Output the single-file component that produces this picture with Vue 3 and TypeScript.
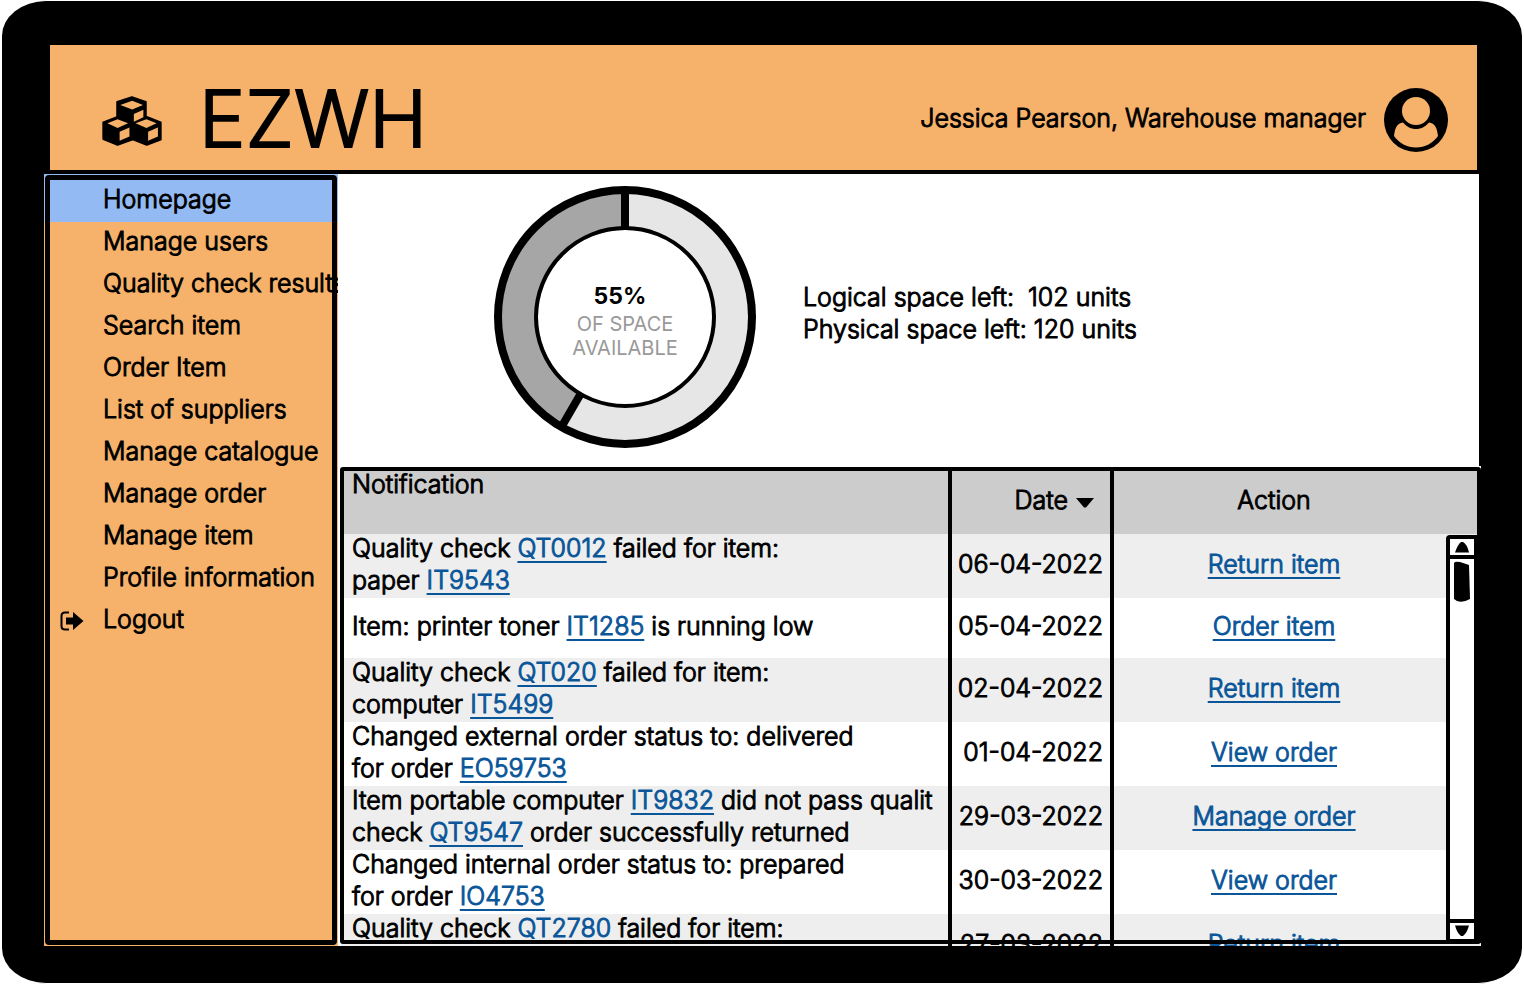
<script setup lang="ts">
interface Part {
  text: string
  link?: boolean
  br?: boolean
}
interface Row {
  parts: Part[]
  date: string
  action: string
  short?: boolean
}

const menu: string[] = [
  'Homepage',
  'Manage users',
  'Quality check results',
  'Search item',
  'Order Item',
  'List of suppliers',
  'Manage catalogue',
  'Manage order',
  'Manage item',
  'Profile information',
]

const rows: Row[] = [
  {
    parts: [
      { text: 'Quality check ' },
      { text: 'QT0012', link: true },
      { text: ' failed for item:', br: true },
      { text: 'paper ' },
      { text: 'IT9543', link: true },
    ],
    date: '06-04-2022',
    action: 'Return item',
  },
  {
    parts: [
      { text: 'Item: printer toner ' },
      { text: 'IT1285', link: true },
      { text: ' is running low' },
    ],
    date: '05-04-2022',
    action: 'Order item',
    short: true,
  },
  {
    parts: [
      { text: 'Quality check ' },
      { text: 'QT020', link: true },
      { text: ' failed for item:', br: true },
      { text: 'computer ' },
      { text: 'IT5499', link: true },
    ],
    date: '02-04-2022',
    action: 'Return item',
  },
  {
    parts: [
      { text: 'Changed external order status to: delivered', br: true },
      { text: 'for order ' },
      { text: 'EO59753', link: true },
    ],
    date: '01-04-2022',
    action: 'View order',
  },
  {
    parts: [
      { text: 'Item portable computer ' },
      { text: 'IT9832', link: true },
      { text: ' did not pass qualit', br: true },
      { text: 'check ' },
      { text: 'QT9547', link: true },
      { text: ' order successfully returned' },
    ],
    date: '29-03-2022',
    action: 'Manage order',
  },
  {
    parts: [
      { text: 'Changed internal order status to: prepared', br: true },
      { text: 'for order ' },
      { text: 'IO4753', link: true },
    ],
    date: '30-03-2022',
    action: 'View order',
  },
  {
    parts: [
      { text: 'Quality check ' },
      { text: 'QT2780', link: true },
      { text: ' failed for item:' },
    ],
    date: '27-03-2022',
    action: 'Return item',
  },
]
</script>

<template>
  <div class="device">
    <header class="top">
      <svg class="cubes" viewBox="36 35 177 146" aria-hidden="true">
        <g stroke="#000" stroke-width="6" stroke-linejoin="round">
          <path d="M81 52 124 38 165 52V98L124 114 81 98z" />
          <path d="M40 112 82 96 125 112V163L82 178 40 161z" />
          <path d="M125 112 168 96 209 112V163L168 178 125 161z" />
        </g>
        <g fill="#f6b26b">
          <path d="M90 61 125 48 157 61 125 74z" />
          <path d="M130 87 158 75V97L130 110z" />
          <path d="M52 115 82 103 113 115 82 129z" />
          <path d="M88 140 117 127V154L88 166z" />
          <path d="M135 115 167 103 197 115 167 129z" />
          <path d="M172 140 201 127V154L172 166z" />
        </g>
      </svg>
      <h1>EZWH</h1>
      <span class="user">Jessica Pearson, Warehouse manager</span>
      <svg class="avatar" viewBox="0 0 64 64" aria-hidden="true">
        <circle cx="32" cy="32" r="32" fill="#000" />
        <path d="M10 48C11 40 13 35 19 34.500 23 39 27 41 32 41s9-2 13-6.500C51 35 53 40 54 48 49 55 41 59.500 32 59.500S15 55 10 48z" fill="#f6b26b" />
        <circle cx="32" cy="23" r="16" fill="#000" />
        <circle cx="32" cy="23" r="14" fill="#f6b26b" />
      </svg>
    </header>

    <div class="body">
      <nav class="side">
        <a v-for="(item, i) in menu" :key="item" href="#" :class="{ active: i === 0 }">{{ item }}</a>
        <a href="#" class="logout">
          <svg viewBox="0 0 24 20" aria-hidden="true">
            <path d="M9 1.500H5Q1.500 1.500 1.500 5v10Q1.500 18.500 5 18.500h4" fill="none" stroke="#000" stroke-width="2" />
            <path d="M6 6.500h7V1l10.500 9L13 19v-5.500H6z" />
          </svg>
          Logout
        </a>
      </nav>

      <main class="main">
        <section class="summary">
          <div class="chart">
            <svg viewBox="0 0 262 262" aria-hidden="true">
              <circle cx="131" cy="131" r="108" fill="none" stroke="#e6e6e6" stroke-width="42" />
              <path d="M131 23A108 108 0 0 0 77 224.500" fill="none" stroke="#a6a6a6" stroke-width="42" />
              <path d="M131 4v38M68 240l18-31" stroke="#000" stroke-width="8" />
              <circle cx="131" cy="131" r="127" fill="none" stroke="#000" stroke-width="8" />
              <circle cx="131" cy="131" r="89" fill="none" stroke="#000" stroke-width="4" />
            </svg>
            <div class="label">
              <strong>55%</strong>
              <span>OF SPACE</span>
              <span>AVAILABLE</span>
            </div>
          </div>
          <div class="space">
            <p>Logical space left:&nbsp; 102 units</p>
            <p>Physical space left: 120 units</p>
          </div>
        </section>

        <section class="grid">
          <table>
            <colgroup>
              <col />
              <col class="c-date" />
              <col class="c-action" />
            </colgroup>
            <thead>
              <tr>
                <th class="h-note"><div class="cell">Notification</div></th>
                <th class="h-date">
                  <div class="cell">
                    <button type="button">
                      Date
                      <svg viewBox="0 0 18 10" aria-hidden="true"><path d="M0 0h18L10 9.500H8z" /></svg>
                    </button>
                  </div>
                </th>
                <th class="h-action"><div class="cell">Action</div></th>
              </tr>
            </thead>
            <tbody>
              <tr v-for="(row, i) in rows" :key="i" :class="{ short: row.short }">
                <td class="note" :class="{ upper: i === rows.length - 1 }">
                  <div class="cell">
                    <template v-for="(p, j) in row.parts" :key="j"><a v-if="p.link" href="#">{{ p.text }}</a><template v-else>{{ p.text }}</template><br v-if="p.br" /></template>
                  </div>
                </td>
                <td class="date"><div class="cell">{{ row.date }}</div></td>
                <td class="action"><div class="cell"><a href="#">{{ row.action }}</a></div></td>
              </tr>
            </tbody>
          </table>
          <div class="scroll">
            <button type="button" aria-label="Scroll up">
              <svg viewBox="0 0 16 12" aria-hidden="true"><path d="M1 11.500Q4 3 7 1h2q4 2 6 10.500z" /></svg>
            </button>
            <div class="track">
              <svg viewBox="0 0 16 42" aria-hidden="true"><path d="M0 2Q1 0 6 1l9 3 1 34q-7 4-13 2l-3-2z" /></svg>
            </div>
            <button type="button" aria-label="Scroll down">
              <svg viewBox="0 0 16 12" aria-hidden="true"><path d="M1 .500h14Q13 8 9 11H7Q3 8 1 .500z" /></svg>
            </button>
          </div>
        </section>
      </main>
    </div>
  </div>
</template>

<style>
body {
  margin: 0;
  background: #fff;
}
</style>

<style scoped>
* {
  box-sizing: border-box;
}
.device {
  height: 100vh;
  min-width: 1100px;
  padding: 44px 41px 37px 42px;
  display: flex;
  flex-direction: column;
  background: #000;
  border: 0 solid #fff;
  border-width: 1px 2px;
  border-radius: 46px / 36px;
  font: 300 25px/32px Inter, "Open Sans", sans-serif;
  -webkit-text-stroke: 1px currentColor;
  color: #000;
}
.top {
  flex: none;
  height: 125px;
  margin: 0 4px 4px 6px;
  padding: 0 29px 0 52px;
  display: flex;
  align-items: center;
  background: #f6b26b;
}
.cubes {
  width: 60px;
  height: 50px;
  margin-top: 27px;
}
h1 {
  margin: 22px 0 0 37px;
  font-size: 78px;
  line-height: 96px;
  font-weight: 300;
  -webkit-text-stroke-width: 2px;
}
.user {
  margin: 20px 18px 0 auto;
}
.avatar {
  width: 64px;
  height: 64px;
  margin-top: 25px;
}
.body {
  flex: 1;
  min-height: 0;
  display: flex;
}
.side {
  flex: none;
  width: 294px;
  position: relative;
  padding-top: 6px;
  overflow: hidden;
  background: #f6b26b;
}
.side::after {
  content: "";
  position: absolute;
  inset: 1px;
  border: 5px solid #000;
  border-radius: 4px;
  pointer-events: none;
}
.side a {
  display: flex;
  align-items: center;
  height: 42px;
  padding: 0 0 4px 59px;
  color: #000;
  text-decoration: none;
  white-space: nowrap;
}
.side a.active {
  height: 48px;
  margin-top: -6px;
  padding: 2px 0 0 59px;
  background: #94baf3;
}
.side a.logout {
  padding-left: 16px;
  gap: 19px;
}
.logout svg {
  width: 24px;
  height: 20px;
  margin-top: 3px;
}
.main {
  flex: 1;
  min-width: 0;
  display: flex;
  flex-direction: column;
}
.summary {
  flex: none;
  height: 292px;
  margin-right: 2px;
  padding: 12px 0 0 156px;
  display: flex;
  align-items: flex-start;
  background: #fff;
}
.chart {
  display: grid;
  width: 262px;
}
.chart > * {
  grid-area: 1 / 1;
}
.label {
  display: flex;
  flex-direction: column;
  align-items: center;
  padding-top: 94px;
  font-size: 20px;
  font-weight: 400;
  line-height: 24px;
  color: #999;
  -webkit-text-stroke-width: 0;
}
.label strong {
  margin-right: 10px;
  font-size: 23px;
  line-height: 32px;
  color: #000;
}
.space {
  padding: 95px 0 0 47px;
}
.space p {
  margin: 0;
}
.grid {
  flex: 1;
  min-height: 0;
  position: relative;
  padding: 4px 0 0 3px;
  overflow: hidden;
  background: #fff;
}
.grid::after {
  content: "";
  position: absolute;
  inset: 1px 0 2px 2px;
  border: 4px solid #000;
  border-radius: 3px;
  pointer-events: none;
}
table {
  width: 100%;
  table-layout: fixed;
  border-collapse: separate;
  border-spacing: 0;
}
.c-date {
  width: 162px;
}
.c-action {
  width: 371px;
}
th,
td {
  height: 64px;
  padding: 0;
  font-weight: 300;
  white-space: nowrap;
}
.cell {
  margin: -2px 0 2px;
}
th {
  background: #ccc;
}
tbody tr:nth-child(odd) td {
  background: #eee;
}
.short td {
  height: 60px;
}
.h-note,
.note {
  padding-left: 11px;
  text-align: left;
}
.h-note,
.upper {
  vertical-align: top;
}
.h-date,
.date,
.h-action,
.action {
  border-left: 4px solid #000;
}
.h-date,
.date {
  text-align: right;
  padding-right: 7px;
}
.h-date {
  padding-right: 16px;
}
.h-date button {
  display: inline-flex;
  align-items: center;
  gap: 8px;
  padding: 0;
  border: 0;
  background: none;
  font: inherit;
  color: inherit;
}
.h-date svg {
  width: 18px;
  height: 10px;
  margin-top: 5px;
}
.h-action,
.action {
  text-align: center;
  padding-right: 47px;
}
td a {
  color: #0a5699;
  text-decoration: underline;
  text-decoration-thickness: 2px;
  text-underline-offset: 4px;
  text-decoration-skip-ink: none;
}
.scroll {
  position: absolute;
  top: 69px;
  right: 0;
  bottom: 3px;
  width: 35px;
  display: flex;
  flex-direction: column;
  background: #fff;
  border: 4px solid #000;
  border-right-width: 7px;
  border-radius: 4px 3px 0 0;
}
.scroll button {
  flex: none;
  height: 16px;
  padding: 0;
  border: 0;
  background: #fff;
  display: grid;
  place-items: center;
}
.scroll button svg {
  width: 16px;
  height: 12px;
}
.track {
  flex: 1;
  border: solid #000;
  border-width: 4px 0;
  padding: 2px 0 0 4px;
}
.track svg {
  display: block;
  width: 16px;
  height: 42px;
}
</style>
